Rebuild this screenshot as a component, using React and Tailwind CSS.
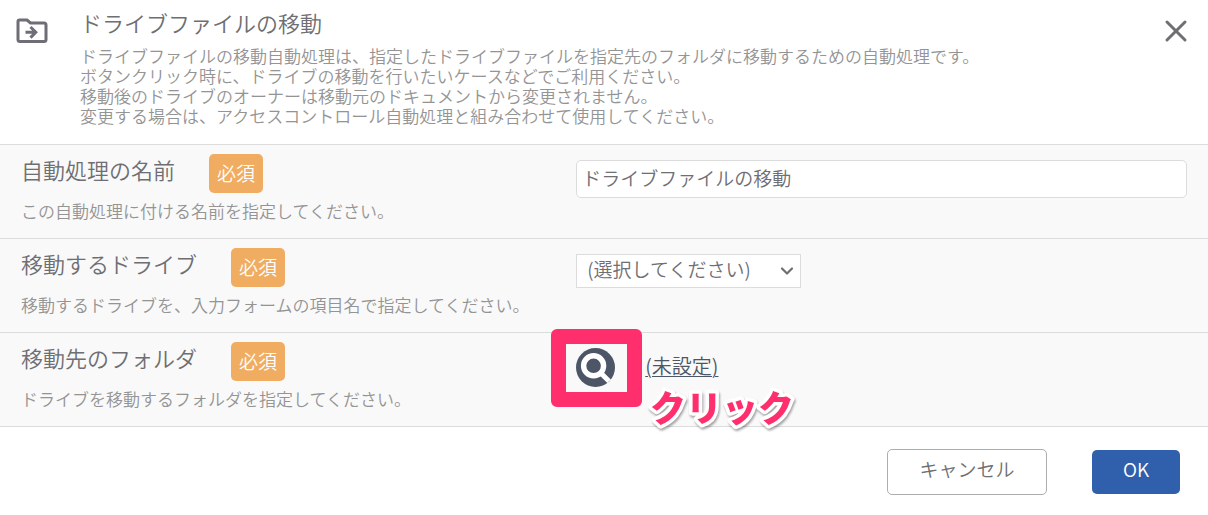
import React from "react";
import { X, ChevronDown } from "lucide-react";

function RequiredBadge() {
  return (
    <span className="rounded-[5px] bg-[#f0ad62] px-2 pt-[3px] pb-[5px] text-[19px] leading-[31px] text-white">
      必須
    </span>
  );
}

function FormRow({ label, htmlFor, hint, children }) {
  return (
    <div className="grid grid-cols-[10fr_11fr] border-t border-[#dcdcdc] bg-[#f9f9f9] px-[21px]">
      <div className="pt-[9px] pb-[15px]">
        <div className="flex items-start gap-[34px]">
          <label htmlFor={htmlFor} className="text-[22px] leading-[30px] text-[#6e6e73]">
            {label}
          </label>
          <RequiredBadge />
        </div>
        <p className="pt-[6px] text-[17px] leading-6 text-[#949494]">{hint}</p>
      </div>
      <div className="pt-[15px]">{children}</div>
    </div>
  );
}

function FolderMoveIcon() {
  return (
    <svg width="32" height="26" viewBox="0 0 32 26" fill="none" aria-hidden="true">
      <path
        d="M3.5 2h7.5l3.5 3h13.5a2 2 0 0 1 2 2v14.5a2 2 0 0 1-2 2H4a2 2 0 0 1-2-2V3.5A1.5 1.5 0 0 1 3.5 2z"
        stroke="#6e6e76"
        strokeWidth="3"
      />
      <path d="M9.5 14.3h10M14.5 9l5.3 5.3-5.3 5.3" stroke="#6e6e76" strokeWidth="3" />
    </svg>
  );
}

function SearchIcon() {
  return (
    <svg width="39" height="39" viewBox="0 0 39 39" fill="none" aria-hidden="true">
      <circle cx="19.5" cy="19.5" r="19.5" fill="#4d5666" />
      <circle cx="17.6" cy="17.8" r="10" stroke="#fff" strokeWidth="5.4" />
      <path d="M24.5 24.7l8.6 8.6" stroke="#fff" strokeWidth="5" />
    </svg>
  );
}

export default function App() {
  return (
    <main
      lang="ja"
      className="bg-white font-['Noto_Sans_CJK_JP',sans-serif] font-[350] text-[#6e6e73]"
    >
      <header className="flex items-start pt-[7px] pr-[14px] pb-[18px] pl-4">
        <div className="w-16 shrink-0 pt-[11px]">
          <FolderMoveIcon />
        </div>
        <div className="flex-1">
          <h1 className="text-[22px] leading-[30px]">ドライブファイルの移動</h1>
          <p className="mt-[9px] text-[17px] leading-5 text-[#949494]">
            ドライブファイルの移動自動処理は、指定したドライブファイルを指定先のフォルダに移動するための自動処理です。
            <br />
            ボタンクリック時に、ドライブの移動を行いたいケースなどでご利用ください。
            <br />
            移動後のドライブのオーナーは移動元のドキュメントから変更されません。
            <br />
            変更する場合は、アクセスコントロール自動処理と組み合わせて使用してください。
          </p>
        </div>
        <button type="button" aria-label="閉じる" className="pt-[6px]">
          <X size={36} strokeWidth={2} color="#6e6e73" />
        </button>
      </header>

      <FormRow
        label="自動処理の名前"
        htmlFor="process-name"
        hint="この自動処理に付ける名前を指定してください。"
      >
        <input
          id="process-name"
          type="text"
          defaultValue="ドライブファイルの移動"
          className="h-[38px] w-full rounded-[5px] border border-[#dcdcdc] bg-white px-[5px] pb-[3px] text-[19px]"
        />
      </FormRow>

      <FormRow
        label="移動するドライブ"
        htmlFor="drive"
        hint="移動するドライブを、入力フォームの項目名で指定してください。"
      >
        <div className="grid w-[225px] items-center">
          <select
            id="drive"
            className="col-start-1 row-start-1 h-[34px] w-full appearance-none border border-[#dcdcdc] bg-white pr-7 pb-[3px] pl-[10px] text-[19px]"
          >
            <option>(選択してください)</option>
          </select>
          <ChevronDown
            size={20}
            strokeWidth={2.6}
            className="pointer-events-none col-start-1 row-start-1 mr-1 justify-self-end"
          />
        </div>
      </FormRow>

      <FormRow
        label="移動先のフォルダ"
        htmlFor="folder"
        hint="ドライブを移動するフォルダを指定してください。"
      >
        <div className="relative flex items-start gap-[30px]">
          <button id="folder" type="button" aria-label="フォルダを検索">
            <SearchIcon />
          </button>
          <a
            href="#folder"
            className="pt-[6px] text-[20px] leading-6 text-[#4d5666] underline decoration-1 underline-offset-2"
          >
            (未設定)
          </a>
          <div className="pointer-events-none absolute -top-[19px] -left-[25px] h-[78px] w-[91px] rounded-md border-[15px] border-[#ff2e6c]" />
          <svg
            className="pointer-events-none absolute top-8 left-[66px] drop-shadow-[1px_2px_1px_rgba(0,0,0,0.35)]"
            width="160"
            height="60"
          >
            <text
              x="8"
              y="42"
              fontSize="36"
              fontWeight="900"
              fill="#ff2e6c"
              stroke="#fff"
              strokeWidth="7"
              strokeLinejoin="round"
              paintOrder="stroke"
            >
              クリック
            </text>
          </svg>
        </div>
      </FormRow>

      <footer className="flex items-center justify-end gap-[45px] border-t border-[#dcdcdc] pt-[22px] pr-7 pb-5">
        <button
          type="button"
          className="h-[46px] w-40 rounded-[5px] border border-[#adadad] bg-white pb-[5px] text-[19px]"
        >
          キャンセル
        </button>
        <button
          type="button"
          className="h-11 w-[88px] rounded-[5px] bg-[#3060ab] pb-[6px] text-[19px] text-white"
        >
          OK
        </button>
      </footer>
    </main>
  );
}
